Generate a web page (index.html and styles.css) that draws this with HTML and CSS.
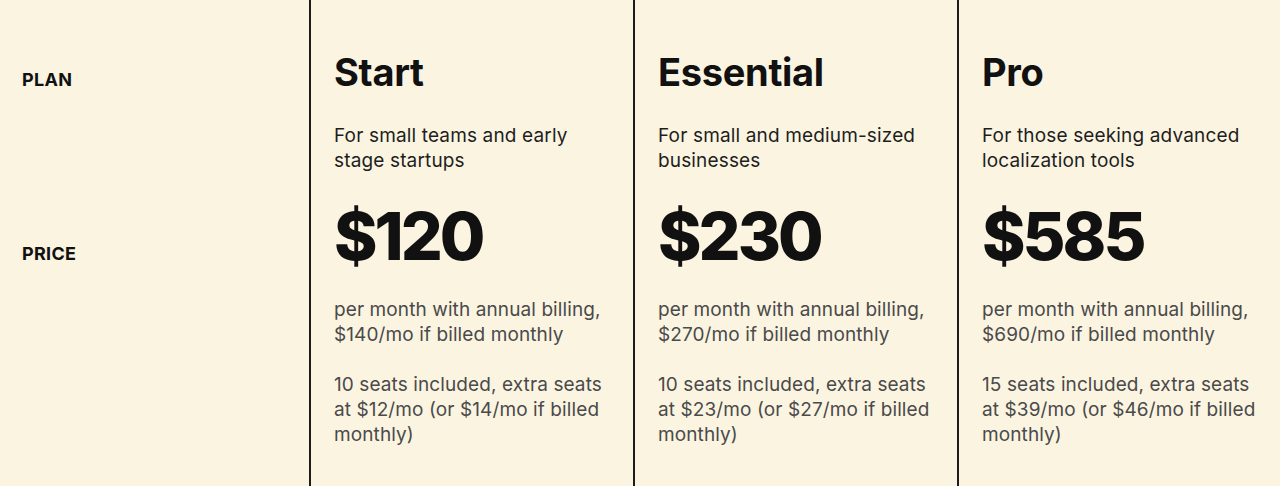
FILE: index.html
```html
<!DOCTYPE html>
<html lang="en">
<head>
<meta charset="utf-8">
<title>Pricing</title>
<link rel="stylesheet" href="styles.css">
</head>
<body>
<div class="table">
  <div class="labels">
    <div class="label label-plan">PLAN</div>
    <div class="label label-price">PRICE</div>
  </div>
  <div class="plan">
    <h2 class="plan-name">Start</h2>
    <p class="plan-desc">For small teams and early stage startups</p>
    <div class="plan-price">$120</div>
    <p class="note">per month with annual billing, $140/mo if billed monthly</p>
    <p class="note">10 seats included, extra seats at $12/mo (or $14/mo if billed monthly)</p>
  </div>
  <div class="plan">
    <h2 class="plan-name">Essential</h2>
    <p class="plan-desc">For small and medium-sized businesses</p>
    <div class="plan-price">$230</div>
    <p class="note">per month with annual billing, $270/mo if billed monthly</p>
    <p class="note">10 seats included, extra seats at $23/mo (or $27/mo if billed monthly)</p>
  </div>
  <div class="plan">
    <h2 class="plan-name">Pro</h2>
    <p class="plan-desc">For those seeking advanced localization tools</p>
    <div class="plan-price">$585</div>
    <p class="note">per month with annual billing, $690/mo if billed monthly</p>
    <p class="note">15 seats included, extra seats at $39/mo (or $46/mo if billed monthly)</p>
  </div>
</div>
</body>
</html>
```

FILE: styles.css
```css
* { box-sizing: border-box; }
html, body {
  margin: 0;
  padding: 0;
  background: #fbf4e1;
}
body {
  font-family: Inter, "Noto Sans", sans-serif;
  color: #111;
  overflow: hidden;
}
.table {
  display: grid;
  grid-template-columns: 309px 324px 324px 1fr;
  height: 486px;
}
.labels {
  padding: 67px 0 0 22px;
}
.label {
  font-size: 18px;
  line-height: 25px;
  font-weight: 700;
  letter-spacing: 0.3px;
}
.label-price {
  margin-top: 149px;
}
.plan {
  border-left: 2px solid #1c1c1c;
  padding: 49px 21px 0 23px;
}
.plan-name {
  margin: 0;
  font-size: 38px;
  line-height: 46px;
  font-weight: 700;
  letter-spacing: -0.3px;
}
.plan-desc {
  margin: 28px 0 0;
  font-size: 19px;
  line-height: 25px;
  letter-spacing: 0.15px;
  color: #1e1e1e;
}
.plan-price {
  margin-top: 30px;
  font-size: 66px;
  line-height: 66px;
  font-weight: 800;
  letter-spacing: -3px;
}
.note {
  margin: 28px 0 0;
  font-size: 19px;
  line-height: 25px;
  letter-spacing: 0.1px;
  color: #4a4a4a;
}
.note + .note {
  margin-top: 25px;
}
```
